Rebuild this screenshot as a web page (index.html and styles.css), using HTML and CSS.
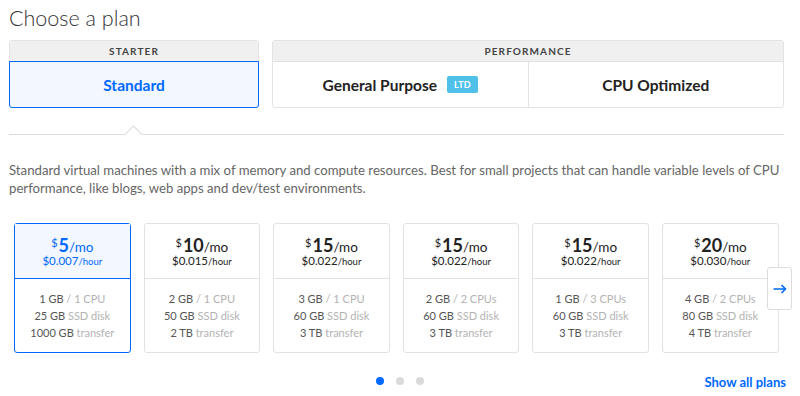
FILE: index.html
```html
<!DOCTYPE html>
<html>
<head>
<meta charset="utf-8">
<link rel="stylesheet" href="styles.css">
</head>
<body>
<h1 class="title">Choose a plan</h1>

<div class="tabs">
  <div class="group group-starter">
    <div class="group-head">STARTER</div>
    <div class="group-body">
      <div class="tab tab-active">Standard</div>
    </div>
  </div>
  <div class="group group-perf">
    <div class="group-head">PERFORMANCE</div>
    <div class="group-body">
      <div class="tab">General Purpose <span class="badge">LTD</span></div>
      <div class="tab tab-sep">CPU Optimized</div>
    </div>
  </div>
</div>

<div class="divider"><span class="caret"></span></div>

<p class="desc">Standard virtual machines with a mix of memory and compute resources. Best for small projects that can handle variable levels of CPU performance, like blogs, web apps and dev/test environments.</p>

<div class="carousel">
  <div class="cards">
    <div class="card card-active">
      <div class="card-top">
        <div class="price"><span class="cur">$</span><span class="amt">5</span><span class="per">/mo</span></div>
        <div class="hourly">$0.007<span class="hr">/hour</span></div>
      </div>
      <div class="card-specs">
        <div>1 GB <span class="mute">/ 1 CPU</span></div>
        <div>25 GB <span class="mute">SSD disk</span></div>
        <div>1000 GB <span class="mute">transfer</span></div>
      </div>
    </div>
    <div class="card">
      <div class="card-top">
        <div class="price"><span class="cur">$</span><span class="amt">10</span><span class="per">/mo</span></div>
        <div class="hourly">$0.015<span class="hr">/hour</span></div>
      </div>
      <div class="card-specs">
        <div>2 GB <span class="mute">/ 1 CPU</span></div>
        <div>50 GB <span class="mute">SSD disk</span></div>
        <div>2 TB <span class="mute">transfer</span></div>
      </div>
    </div>
    <div class="card">
      <div class="card-top">
        <div class="price"><span class="cur">$</span><span class="amt">15</span><span class="per">/mo</span></div>
        <div class="hourly">$0.022<span class="hr">/hour</span></div>
      </div>
      <div class="card-specs">
        <div>3 GB <span class="mute">/ 1 CPU</span></div>
        <div>60 GB <span class="mute">SSD disk</span></div>
        <div>3 TB <span class="mute">transfer</span></div>
      </div>
    </div>
    <div class="card">
      <div class="card-top">
        <div class="price"><span class="cur">$</span><span class="amt">15</span><span class="per">/mo</span></div>
        <div class="hourly">$0.022<span class="hr">/hour</span></div>
      </div>
      <div class="card-specs">
        <div>2 GB <span class="mute">/ 2 CPUs</span></div>
        <div>60 GB <span class="mute">SSD disk</span></div>
        <div>3 TB <span class="mute">transfer</span></div>
      </div>
    </div>
    <div class="card">
      <div class="card-top">
        <div class="price"><span class="cur">$</span><span class="amt">15</span><span class="per">/mo</span></div>
        <div class="hourly">$0.022<span class="hr">/hour</span></div>
      </div>
      <div class="card-specs">
        <div>1 GB <span class="mute">/ 3 CPUs</span></div>
        <div>60 GB <span class="mute">SSD disk</span></div>
        <div>3 TB <span class="mute">transfer</span></div>
      </div>
    </div>
    <div class="card">
      <div class="card-top">
        <div class="price"><span class="cur">$</span><span class="amt">20</span><span class="per">/mo</span></div>
        <div class="hourly">$0.030<span class="hr">/hour</span></div>
      </div>
      <div class="card-specs">
        <div>4 GB <span class="mute">/ 2 CPUs</span></div>
        <div>80 GB <span class="mute">SSD disk</span></div>
        <div>4 TB <span class="mute">transfer</span></div>
      </div>
    </div>
  </div>
  <button class="next" aria-label="Next">
    <svg width="14" height="10" viewBox="0 0 14 10"><path d="M0.5 5H12.5M8.5 1L12.5 5L8.5 9" fill="none" stroke="#0069ff" stroke-width="1.6"/></svg>
  </button>
</div>

<div class="footer">
  <div class="spacer"></div>
  <div class="dots"><span class="dot dot-on"></span><span class="dot"></span><span class="dot"></span></div>
  <div class="more"><a class="show-all">Show all plans</a></div>
</div>
</body>
</html>
```

FILE: styles.css
```css
* { box-sizing: border-box; }
body {
  margin: 0;
  padding: 0 9px;
  font-family: Lato, "Open Sans", sans-serif;
  color: #333;
  background: #fff;
}
.title {
  margin: 0;
  padding-top: 4px;
  font-size: 21.5px;
  font-weight: 300;
  line-height: 28px;
  color: #333;
}
.tabs {
  display: flex;
  gap: 13px;
  margin-top: 8px;
  width: 775px;
}
.group {
  border: 1px solid #e3e3e3;
  border-radius: 3px;
}
.group-starter { width: 250px; }
.group-perf { flex: 1; }
.group-head {
  height: 21px;
  background: #f0f0f0;
  border-bottom: 1px solid #e3e3e3;
  text-align: center;
  font-size: 10px;
  font-weight: 700;
  letter-spacing: 1.1px;
  line-height: 21px;
  color: #444;
  border-radius: 3px 3px 0 0;
}
.group-body {
  display: flex;
  height: 45px;
}
.tab {
  flex: 1;
  display: flex;
  align-items: center;
  justify-content: center;
  font-size: 15.5px;
  font-weight: 700;
  color: #222;
}
.tab-sep { border-left: 1px solid #e3e3e3; }
.tab-active {
  margin: -1px;
  height: 47px;
  border: 1px solid #0069ff;
  border-radius: 0 0 3px 3px;
  background: #f3f7ff;
  color: #0069ff;
}
.badge {
  display: inline-block;
  margin-left: 10px;
  width: 31px;
  height: 17px;
  line-height: 17px;
  border-radius: 2px;
  background: #4fc1e9;
  color: #fff;
  font-size: 9px;
  font-weight: 700;
  letter-spacing: 0.3px;
  text-align: center;
}
.divider {
  position: relative;
  margin-top: 26px;
  width: 775px;
  height: 1px;
  background: #dcdcdc;
}
.caret {
  position: absolute;
  left: 118px;
  top: -6px;
  width: 13px;
  height: 13px;
  background: #fff;
  border-left: 1px solid #dcdcdc;
  border-top: 1px solid #dcdcdc;
  transform: rotate(45deg);
}
.desc {
  margin: 26px 0 0;
  font-size: 13.2px;
  line-height: 18px;
  color: #666;
}
.carousel {
  position: relative;
  margin-top: 26px;
  padding-left: 5px;
}
.cards {
  display: flex;
  gap: 13px;
}
.card {
  width: 116.6px;
  height: 130px;
  border: 1px solid #e2e2e2;
  border-radius: 3px;
  text-align: center;
  flex: none;
}
.card-top {
  height: 55px;
  border-bottom: 1px solid #e2e2e2;
  padding-top: 9px;
  color: #222;
}
.price {
  line-height: 20px;
  height: 20px;
}
.cur {
  font-size: 11px;
  vertical-align: 5px;
  margin-right: 1px;
}
.amt {
  font-size: 18px;
  font-weight: 700;
}
.per {
  font-size: 13.5px;
}
.hourly {
  margin-top: 1px;
  font-size: 11.5px;
  line-height: 14px;
}
.hr { font-size: 9.5px; }
.card-specs {
  padding-top: 11px;
  font-size: 11px;
  line-height: 17px;
  color: #555;
}
.mute { color: #b3b3b3; }
.card-active {
  border-color: #0069ff;
}
.card-active .card-top {
  background: #f3f7ff;
  border-bottom-color: #0069ff;
  color: #0069ff;
}
.next {
  position: absolute;
  left: 758px;
  top: 44px;
  width: 25px;
  height: 43px;
  padding: 0;
  background: #fff;
  border: 1px solid #dcdcdc;
  border-radius: 3px;
  display: flex;
  align-items: center;
  justify-content: center;
}
.footer {
  display: grid;
  grid-template-columns: 1fr auto 1fr;
  align-items: center;
  margin-top: 18px;
}
.dots {
  display: flex;
  gap: 12px;
}
.dot {
  width: 8px;
  height: 8px;
  border-radius: 50%;
  background: #dadada;
}
.dot-on { background: #0069ff; }
.more {
  text-align: right;
  padding-right: 5px;
}
.show-all {
  font-size: 13px;
  font-weight: 700;
  color: #0069ff;
}
```
